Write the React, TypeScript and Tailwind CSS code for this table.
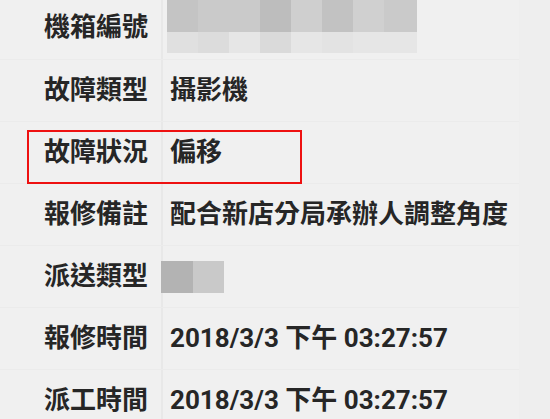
import React from "react";

const font = { fontFamily: '"Roboto", "Noto Sans CJK TC", sans-serif' };

function Pixels({ cells, className }: { cells: string[][]; className?: string }) {
  return (
    <div className={className}>
      {cells.map((row, i) => (
        <div key={i} className="flex">
          {row.map((c, j) => (
            <div key={j} className={c} />
          ))}
        </div>
      ))}
    </div>
  );
}

function Row({ label, children }: { label: string; children?: React.ReactNode }) {
  return (
    <div className="grid grid-cols-[163px_1fr] h-[62px] border-b border-[#ebebeb]">
      <div className="flex items-center justify-end pr-[13px] border-r-2 border-[#e8e8e8] text-[26px] font-bold text-[#262626]">
        {label}
      </div>
      <div className="flex items-center pl-[7px] text-[26px] font-bold text-[#262626]">{children}</div>
    </div>
  );
}

export default function App() {
  return (
    <div className="relative w-[550px] h-[419px] overflow-hidden bg-[#eeeeee]" style={font}>
      <div className="w-[519px] bg-[#f0f0f0]">
        <div className="grid grid-cols-[163px_1fr] h-[60px] border-b border-[#ebebeb]">
          <div className="flex items-center justify-end pr-[13px] pb-[4px] border-r-2 border-[#e8e8e8] text-[26px] font-bold text-[#262626]">
            機箱編號
          </div>
          <div className="pl-[4px]">
            <Pixels
              cells={[
                [
                  "w-[31px] h-[32px] bg-[#c4c4c4]",
                  "w-[31px] h-[32px] bg-[#cacaca]",
                  "w-[31px] h-[32px] bg-[#cacaca]",
                  "w-[31px] h-[32px] bg-[#bdbdbd]",
                  "w-[31px] h-[32px] bg-[#cfcfcf]",
                  "w-[31px] h-[32px] bg-[#c2c2c2]",
                  "w-[31px] h-[32px] bg-[#d0d0d0]",
                  "w-[33px] h-[32px] bg-[#cacaca]",
                ],
                [
                  "w-[31px] h-[21px] bg-[#e0e0e0]",
                  "w-[31px] h-[21px] bg-[#dcdcdc]",
                  "w-[31px] h-[21px] bg-[#e6e6e6]",
                  "w-[31px] h-[21px] bg-[#dadada]",
                  "w-[31px] h-[21px] bg-[#e6e6e6]",
                  "w-[31px] h-[21px] bg-[#e3e3e3]",
                  "w-[31px] h-[21px] bg-[#e6e6e6]",
                  "w-[33px] h-[21px] bg-[#e6e6e6]",
                ],
              ]}
            />
          </div>
        </div>
        <Row label="故障類型">攝影機</Row>
        <Row label="故障狀況">偏移</Row>
        <Row label="報修備註">配合新店分局承辦人調整角度</Row>
        <Row label="派送類型">
          <Pixels
            className="-ml-[9px]"
            cells={[["w-[32px] h-[32px] bg-[#b3b3b3]", "w-[31px] h-[32px] bg-[#c9c9c9]"]]}
          />
        </Row>
        <Row label="報修時間">2018/3/3 下午 03:27:57</Row>
        <Row label="派工時間">2018/3/3 下午 03:27:57</Row>
      </div>
      <div className="absolute left-[27px] top-[130px] w-[275px] h-[54px] border-2 border-[#ee1111]" />
    </div>
  );
}
